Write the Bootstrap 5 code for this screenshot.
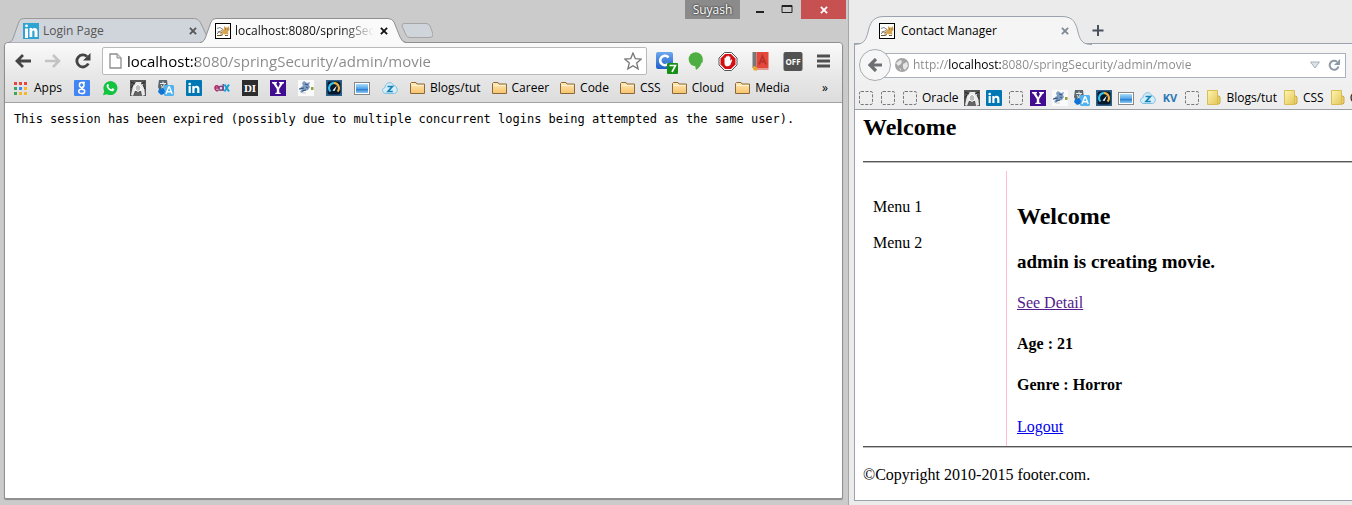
<!DOCTYPE html>
<html lang="en">
<head>
<meta charset="utf-8">
<meta name="viewport" content="width=device-width, initial-scale=1">
<title>Session test</title>
<link href="https://cdn.jsdelivr.net/npm/bootstrap@5.3.0/dist/css/bootstrap.min.css" rel="stylesheet">
<style>
body{background:#ebebeb;font:12px/16px "Open Sans","Noto Sans",sans-serif;color:#000;overflow:hidden}
.desk{display:grid;grid-template-columns:849fr 503fr;min-height:100vh}
button{font:inherit;color:inherit;background:none;border:0;padding:0}
button svg,a svg{display:block;flex:none}
.i16{width:16px;height:16px}
.bm{display:flex;align-items:center;gap:4px;color:#000;text-decoration:none;white-space:nowrap;flex:none}

/* Chrome window */
.chrome{background:#cbcbcb;border-right:1px solid #a6a6a6;padding:0 5px 6px 4px;min-width:0}
.caption-bar{height:18px}
.user{background:#8b8b8b;color:#fff;height:19px;width:55px;text-shadow:0 0 2px #333,0 0 2px #333;line-height:18px;margin-right:14px}
.cap{width:12px;height:19px;margin-right:15px}
.cap.big{margin-right:8px}
.close-x{background:#c75050;width:45px;height:19px;margin-right:-3px}
.ctabs{height:25px;padding-left:4px;margin-bottom:-1px;position:relative}
.ctab{position:relative;width:205px;height:25px;padding:0 16px 0 15px;color:#555}
.ctab.on{margin-left:-13px;width:206px;padding:0 18px 0 15px;color:#111}
.ctab > .shape{position:absolute;inset:0;width:100%;height:100%}
.ctab > button{position:relative}
.ctab .ttl{overflow:hidden;white-space:nowrap;text-align:left;gap:4px}
.ctab.on .ttl{margin-right:6px;-webkit-mask-image:linear-gradient(90deg,#000 80%,transparent);mask-image:linear-gradient(90deg,#000 80%,transparent)}
.newtab{margin-left:-5px}
.cframe{border:1px solid #8f8f8f;border-radius:4px 4px 2px 2px;box-shadow:0 1px 1px #8a8a8a;background:#fff}
.ctop{background:linear-gradient(#fafafa,#e8e8e8 55%,#dcdcdc);border-bottom:1px solid #a2a2a2;border-radius:4px 4px 0 0;height:60px}
.ctool{height:36px;padding:0 11px 0 10px}
.navs{gap:14px;margin-right:11px}
.exts{gap:10px;margin-left:9px}
.omni{height:28px;border:1px solid #b9b9b9;border-radius:2px;background:#fff;padding:0 4px 0 6px;min-width:0}
.url{border:0;outline:0;padding:0;min-width:0;color:#888;-webkit-text-fill-color:transparent}
.omni .url{font-size:15px;line-height:24px;background:linear-gradient(90deg,#000 69px,#888 0) text;-webkit-background-clip:text;margin-left:5px}
.cbook{gap:12px;height:18px;padding:0 14px 0 9px}
.cbook .apps{gap:7px}
.folders{gap:11px}
.session{font:12px/16px "DejaVu Sans Mono",monospace;padding:8px 9px}

/* Firefox window */
.fox{padding:16px 0 4px 5px;min-width:0;overflow:hidden}
.ftabs{height:28px;margin-bottom:-1px;position:relative}
.ftab{position:relative;width:238px;height:29px;padding:0 23px 0 25px}
.ftab .ttl{gap:6px}
.ftab .shut{color:#7d8893}
.ftab > .shape{position:absolute;inset:0;width:100%;height:100%}
.ftab > button{position:relative}
.fframe{border:1px solid #9aa3ad;border-right:0;background:#fff}
.ftop{background:linear-gradient(#f5f5f5,#ededed);border-bottom:1px solid #9c9fa3;height:66px}
.ftool{height:42px;padding:0 6px 0 4px}
.fback{width:32px;height:32px;border:1px solid #a9adb3;border-radius:50%;background:#f6f6f6;position:relative;flex:none}
.fbar{height:25px;border:1px solid #a9b1bd;background:#fff;margin-left:-8px;padding:0 5px 0 11px;min-width:0}
.fbar .url{font-size:12px;line-height:20px;background:linear-gradient(90deg,#888 36px,#000 36px 88px,#888 88px) text;-webkit-background-clip:text}
.fbook{gap:6px;height:23px;padding-left:3px;overflow:hidden}
.blank{width:16px;height:16px;display:block;flex:none;padding:1px}
.doc{font:16px/18px "Liberation Serif",serif;padding:3px 0 0 8px}
.doc h2{font:bold 24px/28px "Liberation Serif",serif;margin:0 0 20px}
.doc h3{font:bold 19px/22px "Liberation Serif",serif;margin:0 0 21px}
.doc p{margin:0 0 23px}
.rule{border:0;border-top:1px solid #555;border-bottom:1px solid #bbb;height:2px;margin:0;opacity:1}
.cols{margin-top:8px}
.menu{flex:0 0 144px;border-right:1px solid pink;padding:27px 10px 0}
.menu a{display:block;color:#000;text-decoration:none;margin-bottom:18px}
.main{padding:31px 10px 10px}
.main h2{margin-bottom:21px}
.main p:last-of-type{margin-bottom:24px}
.main a{color:#0000ee}.main a.seen{color:#551a8b}
.foot{margin-top:18px}
</style>
</head>
<body>
<svg width="0" height="0" class="position-absolute" aria-hidden="true">
<defs>
<linearGradient id="gf" x2="0" y2="1"><stop stop-color="#ffe9b8"/><stop offset="1" stop-color="#f7c36b"/></linearGradient>
<linearGradient id="gy" x2="1" y2="1"><stop stop-color="#fff6b0"/><stop offset="1" stop-color="#e3c65a"/></linearGradient>
<linearGradient id="gb" x2="0" y2="1"><stop stop-color="#6fa8ee"/><stop offset="1" stop-color="#1d5fc8"/></linearGradient>
<linearGradient id="gs" x2="0" y2="1"><stop stop-color="#a9dbfa"/><stop offset=".55" stop-color="#4aa0e6"/><stop offset=".6" stop-color="#2f7fcf"/><stop offset="1" stop-color="#8ccaf2"/></linearGradient>
</defs>
<symbol id="cat" viewBox="0 0 16 16"><rect x=".5" y=".5" width="15" height="15" fill="#fff" stroke="#000"/><path d="M5 11l2-3 2-2V3l2 1.500h1.500L14 3l.5 4-1.500 1.500.5 3.500-1.500-1-2 .5-2-1-2 1.500z" fill="#d8a450"/><path d="M2 5.500l3-1 3 2-2 1.500-3.500 1M2 11l2-2 3 .5" fill="none" stroke="#8a8580"/><path d="M2 12.500h4l2-1M10 12.500h3M10 6h1M12.500 6h1" fill="none" stroke="#6d5630"/></symbol>
<symbol id="in" viewBox="0 0 16 16"><rect width="16" height="16" rx="1" fill="#0077b5"/><circle cx="3.700" cy="4" r="1.300" fill="#fff"/><path d="M2.600 6h2.200v7H2.600zM6.300 6h2.100v1c1.200-1.900 5-1.700 5 1.700V13h-2.200V9.400c0-2.300-2.700-2-2.700 0V13H6.300z" fill="#fff"/></symbol>
<symbol id="lin" viewBox="0 0 16 16"><rect width="16" height="16" fill="#2fa3d1"/><circle cx="3.500" cy="2.800" r="1.400" fill="#fff"/><path d="M2 5.500h3V15H2zM6.500 5h2.700v1.300C11 4 14.500 5 14.500 8v6h-3V8.800c0-2-2.200-1.700-2.200 0V14H6.500z" fill="#fff"/></symbol>
<symbol id="goog" viewBox="0 0 16 16"><rect width="16" height="16" rx="1" fill="#4285f4"/><g fill="none" stroke="#fff" stroke-width="1.500"><ellipse cx="7.700" cy="5" rx="2.300" ry="2.400"/><ellipse cx="7.700" cy="11.400" rx="3" ry="2.100"/><path d="M8 2.600h3M9.500 7c-3 .8-1.500 1.500 0 2.800"/></g></symbol>
<symbol id="wa" viewBox="0 0 16 16"><path d="M1 15.300l1.200-4A7 7 0 1 1 5 14.200z" fill="#11c33f"/><path d="M5.200 4.300c.7-.6 1.200-.3 1.600.9.300.8-.6 1-.4 1.600.5 1.200 1.500 2 2.600 2.400.7.200 1-1.300 1.600-1 1.300.5 1.900.9 1.600 1.500-.8 2-2.900 1.800-4.700.6C5.600 9 3.600 6.300 5.200 4.300z" fill="#fff"/></symbol>
<symbol id="arch" viewBox="0 0 16 16"><rect width="16" height="16" fill="#555"/><path d="M1 15L3 6l3-4h5l3 4 1 9-3 1-1-5H5l-2 5z" fill="#e9e9e9"/><path d="M1 2l4 2M15 2l-4 2M1 8l2-3M15 9l-2-4" stroke="#222"/><path d="M5.500 10l-.5-3 3-3 3 3-.5 3-2.500 1.500z" fill="#bdbdbd" stroke="#fff"/><path d="M4 16l2-4h4l2 4z" fill="#666"/></symbol>
<symbol id="tr" viewBox="0 0 16 16"><path d="M1 0h8l1 8-3 3H2L0 7z" fill="#5a666d"/><path d="M2 3.500h6M5 1.500v2M3 8.500c2-1 3-3 3.500-5M3 5c1 2 2 3 4 3.500" stroke="#e9eef0" fill="none"/><path d="M7 5h8l1 1v9l-1 1H7L6 15V6z" fill="#4eb3ef"/><path d="M1 9l4-1 2 3-1 3-3 1-3-3z" fill="#1173d4"/><path d="M8 14l2.700-7h.8l2.700 7M9 11.700h4.300" stroke="#fff" stroke-width="1.400" fill="none"/></symbol>
<symbol id="yah" viewBox="0 0 16 16"><rect width="16" height="16" fill="#410c8f"/><path d="M2 2h5v1.300l-1 .3 2.200 3.900 2-3.900-1.200-.3V2h5v1.300l-1.300.4L9.200 9v3.500l1.500.4V14H5.300v-1.100l1.500-.4V9L3.300 3.700 2 3.300z" fill="#fff"/></symbol>
<symbol id="mouse" viewBox="0 0 16 16"><rect width="16" height="16" fill="#fafafa"/><path d="M4 3l2-2 3 2 3-1-1 3 1 2-2 3-4 1-2 2-2-1 2-3-3 1 2-3 2-1z" fill="#7d9cc0"/><path d="M7 4l3 1M1 9l5-1M4 11l4-1M8 7l2 1" stroke="#33507a" fill="none"/><path d="M4 13h4" stroke="#ccc"/><path d="M13 7h2.500v3H13z" fill="#93a03c"/></symbol>
<symbol id="gauge" viewBox="0 0 16 16"><rect width="16" height="16" fill="#2d5f8a"/><rect x="1.500" y="1.500" width="13" height="13" rx="2" fill="#06182b"/><path d="M4.500 11.500A5 5 0 0 1 8 3" fill="none" stroke="#36c1ee" stroke-width="2"/><path d="M8 3a5 5 0 0 1 3.500 8.500" fill="none" stroke="#f0b53c" stroke-width="2"/><path d="M6.500 10.500L11 5.500 8.500 11z" fill="#fff"/></symbol>
<symbol id="pic" viewBox="0 0 16 16"><rect x=".5" y="2.500" width="15" height="12" fill="#fff" stroke="#888"/><rect x="2" y="4" width="12" height="9" fill="url(#gs)"/></symbol>
<symbol id="cloud" viewBox="0 0 16 16"><path d="M4 13.500C-.5 13.500-.3 8 3 7.500 3.500 2 10 1 11.500 5.500c4 .2 5.500 7 1 8z" fill="#d3eefa" stroke="#7fbfdd"/><path d="M5.500 6.500h4.800l-4.300 5h4.800" fill="none" stroke="#1683b8" stroke-width="1.700"/></symbol>
<symbol id="fold" viewBox="0 0 16 16"><path d="M.5 13.500v-10l1-1H6l1 1.500h7.500v9.500z" fill="url(#gf)" stroke="#8a6a3c"/><path d="M1.500 5.500h12" stroke="#fff3d4"/></symbol>
<symbol id="ffold" viewBox="0 0 16 16"><path d="M10 6h3l1 1v6l-1 1h-3z" fill="#e8d06a" stroke="#c9a93f"/><path d="M1.500.5h10v14h-10z" fill="url(#gy)" stroke="#d9bd55"/></symbol>
<symbol id="dash" viewBox="0 0 14 14"><rect x=".5" y=".5" width="13" height="13" rx="1.500" fill="none" stroke="#777" stroke-dasharray="3 1.500"/></symbol>
<symbol id="x" viewBox="0 0 9 9"><path d="M1 1l7 7M8 1L1 8" stroke="currentColor" stroke-width="2"/></symbol>
</svg>

<div class="desk">
<section class="chrome d-flex flex-column" aria-label="Chrome window">
  <div class="caption-bar d-flex justify-content-end">
    <button class="user">Suyash</button>
    <button class="cap" aria-label="Minimize"><svg width="12" height="19"><path d="M2 12h8" stroke="#222" stroke-width="2"/></svg></button>
    <button class="cap big" aria-label="Maximize"><svg width="12" height="19"><path d="M1 5.500h10v7H1z" fill="none" stroke="#222"/><path d="M1 6h10" stroke="#222" stroke-width="2"/></svg></button>
    <button class="close-x d-flex align-items-center justify-content-center text-white" aria-label="Close"><svg width="8" height="8"><use href="#x"/></svg></button>
  </div>
  <div class="ctabs d-flex">
    <div class="ctab d-flex align-items-center">
      <svg class="shape" viewBox="0 0 208 25" preserveAspectRatio="none"><path d="M1 24.500C4 24 5 21 6 18L11 4Q12 .5 16 .5H189Q193 .5 195 4L205 24.500" fill="#d0d4db" stroke="#999"/></svg>
      <button class="ttl d-flex align-items-center flex-grow-1"><svg class="i16"><use href="#lin"/></svg><span>Login Page</span></button>
      <button aria-label="Close tab"><svg width="8" height="8"><use href="#x"/></svg></button>
    </div>
    <div class="ctab on d-flex align-items-center">
      <svg class="shape" viewBox="0 0 206 25" preserveAspectRatio="none"><path d="M0 25C4 24.500 5 21 6 18L11 4Q12 .5 16 .5H188Q192 .5 194 4L200 19Q202 24.500 206 25z" fill="#fafafa"/><path d="M0 24.500C4 24 5 21 6 18L11 4Q12 .5 16 .5H188Q192 .5 194 4L200 19Q202 24 206 24.500" fill="none" stroke="#8f8f8f"/></svg>
      <button class="ttl d-flex align-items-center"><svg class="i16"><use href="#cat"/></svg><span>localhost:8080/springSecu</span></button>
      <button class="ms-auto" aria-label="Close tab"><svg width="8" height="8"><use href="#x"/></svg></button>
    </div>
    <button aria-label="New tab" class="newtab align-self-start"><svg width="32" height="24"><path d="M3 5.500h22q3 0 4 2.500l3 8q0 3.500-3 3.500H9q-3 0-4-2.500L1 8q0-2.500 2-2.500z" fill="#d0d4db" stroke="#a5a5a5"/></svg></button>
  </div>
  <div class="cframe flex-grow-1">
    <div class="ctop">
      <div class="ctool d-flex align-items-center">
        <div class="navs d-flex">
          <button aria-label="Back"><svg width="16" height="16" viewBox="0 0 16 16"><path d="M16 8H2M8 2L2 8l6 6" fill="none" stroke="#444" stroke-width="2.800"/></svg></button>
          <button aria-label="Forward"><svg width="16" height="16" viewBox="0 0 16 16"><path d="M0 8h13M8 2l6 6-6 6" fill="none" stroke="#c3c3c3" stroke-width="2.500"/></svg></button>
          <button aria-label="Reload"><svg width="16" height="16" viewBox="0 0 16 16"><path d="M13.300 10.500A6 6 0 1 1 12 3.600" fill="none" stroke="#444" stroke-width="2.800"/><path d="M15.500 0v7.500H8z" fill="#444"/></svg></button>
        </div>
        <div class="omni d-flex align-items-center flex-grow-1">
          <svg width="13" height="16" viewBox="0 0 13 16" class="flex-shrink-0"><path d="M1 1h7l4 4v10H1z" fill="#fff" stroke="#8d8d8d" stroke-width="1.300"/><path d="M8 1v4h4" fill="#ddd" stroke="#8d8d8d"/></svg>
          <input class="url flex-grow-1" aria-label="Address" value="localhost:8080/springSecurity/admin/movie">
          <button aria-label="Bookmark this page"><svg width="18" height="18" viewBox="0 0 18 18"><path d="M9 1l2.300 5.600 6 .5-4.600 3.900 1.400 5.900L9 13.700l-5.100 3.200L5.300 11 .7 7.100l6-.5z" fill="#fff" stroke="#777" stroke-width="1.300"/></svg></button>
        </div>
        <div class="exts d-flex align-items-center">
          <button class="pt-1" aria-label="Extension C, 7 items"><svg width="22" height="22" viewBox="0 0 22 22"><rect width="17" height="17" rx="2" fill="url(#gb)"/><path d="M12.500 5.500A4.700 4.700 0 1 0 12.500 11.500" fill="none" stroke="#fff" stroke-width="2.600"/><rect x="11" y="11" width="11" height="11" rx="1" fill="#159015"/><path d="M13.500 13.500h6L16 20" fill="none" stroke="#fff" stroke-width="1.600"/></svg></button>
          <button class="me-1" aria-label="Green extension"><svg width="16" height="18" viewBox="0 0 16 18"><path d="M7 13h5q4-3 3-6-1 7-7 11z" fill="#4fae41"/><circle cx="7.700" cy="7.200" r="7" fill="#4fae41"/></svg></button>
          <button class="me-1" aria-label="Ad blocker"><svg width="20" height="19" viewBox="0 0 19 19"><path d="M6 .5h7L18.500 6v7L13 18.500H6L.5 13V6z" fill="#fff" stroke="#555"/><path d="M6.500 2h6L17 6.500v6L12.500 17h-6L2 12.500v-6z" fill="#d40f14"/><path d="M6 11V6q.7-.8 1.400 0V4.700q.7-.8 1.500 0V4q.7-.8 1.400 0v.8q.8-.8 1.500 0V9l1-1.500q1-.3 1 .5l-2 5q-2 2-4.500 1-1.500-1-1.300-3z" fill="#fff"/></svg></button>
          <button class="me-1" aria-label="Dictionary"><svg width="17" height="19" viewBox="0 0 16 19"><path d="M0 0h4v16H0z" fill="#777"/><path d="M4 0h12v16H4z" fill="#e4483c"/><path d="M6.500 12.500L10 4l3.500 8.500M7.500 9.500h5" fill="none" stroke="#b73229" stroke-width="1.800"/><path d="M4 16.500h12v1H4z" fill="#d43"/><path d="M0 15l2-1 3 2-1 3-3-1z" fill="#e8a62c"/></svg></button>
          <button class="me-1" aria-label="Extension off"><svg width="20" height="19" viewBox="0 0 19 19"><rect width="19" height="19" rx="2" fill="#525252"/><text x="9.500" y="13" font-size="8" font-weight="700" font-family="Open Sans, sans-serif" fill="#fff" text-anchor="middle">OFF</text></svg></button>
          <button aria-label="Menu"><svg width="14" height="14" viewBox="0 0 14 14"><path d="M0 2h13M0 7h13M0 12h13" stroke="#505050" stroke-width="3"/></svg></button>
        </div>
      </div>
      <nav class="cbook d-flex align-items-center" aria-label="Bookmarks">
        <a class="bm apps" href="#"><svg width="13" height="13" viewBox="0 0 13 13"><path d="M0 0h3v3H0zM5 0h3v3H5zM10 0h3v3h-3z" fill="#e8453c"/><path d="M0 5h3v3H0zM0 10h3v3H0z" fill="#3aa757"/><path d="M5 5h3v3H5z" fill="#4285f4"/><path d="M10 5h3v3h-3zM5 10h3v3H5zM10 10h3v3h-3z" fill="#f9b52c"/></svg>Apps</a>
        <a class="bm" href="#" aria-label="Google"><svg class="i16"><use href="#goog"/></svg></a>
        <a class="bm" href="#" aria-label="WhatsApp"><svg class="i16"><use href="#wa"/></svg></a>
        <a class="bm" href="#" aria-label="Archive"><svg class="i16"><use href="#arch"/></svg></a>
        <a class="bm" href="#" aria-label="Translate"><svg class="i16"><use href="#tr"/></svg></a>
        <a class="bm" href="#" aria-label="LinkedIn"><svg class="i16"><use href="#in"/></svg></a>
        <a class="bm" href="#" aria-label="Courses"><svg class="i16" viewBox="0 0 16 16"><g fill="none" stroke-width="1.500"><path d="M1 8h3.500C4.500 5 1 5 1 8s2.500 3 3.500 2" stroke="#b72667"/><circle cx="7" cy="8.300" r="2" stroke="#7d4a86"/><path d="M9.200 4v7" stroke="#7d4a86"/><path d="M10.500 4.500l4.500 7M15 4.500l-4.500 7" stroke="#1d9dd9" stroke-width="2"/></g></svg></a>
        <a class="bm" href="#" aria-label="DI"><svg class="i16" viewBox="0 0 16 16"><rect width="16" height="16" fill="#2d2d2d"/><text x="8" y="12" font-size="11" font-weight="700" font-family="Liberation Serif, serif" fill="#fff" text-anchor="middle">DI</text></svg></a>
        <a class="bm" href="#" aria-label="Yahoo"><svg class="i16"><use href="#yah"/></svg></a>
        <a class="bm" href="#" aria-label="Mouse"><svg class="i16"><use href="#mouse"/></svg></a>
        <a class="bm" href="#" aria-label="Speed test"><svg class="i16"><use href="#gauge"/></svg></a>
        <a class="bm" href="#" aria-label="Screen"><svg class="i16"><use href="#pic"/></svg></a>
        <a class="bm" href="#" aria-label="Cloud files"><svg class="i16"><use href="#cloud"/></svg></a>
        <div class="folders d-flex">
          <a class="bm" href="#"><svg class="i16"><use href="#fold"/></svg>Blogs/tut</a>
          <a class="bm" href="#"><svg class="i16"><use href="#fold"/></svg>Career</a>
          <a class="bm" href="#"><svg class="i16"><use href="#fold"/></svg>Code</a>
          <a class="bm" href="#"><svg class="i16"><use href="#fold"/></svg>CSS</a>
          <a class="bm" href="#"><svg class="i16"><use href="#fold"/></svg>Cloud</a>
          <a class="bm" href="#"><svg class="i16"><use href="#fold"/></svg>Media</a>
        </div>
        <button class="ms-auto" aria-label="More bookmarks">»</button>
      </nav>
    </div>
    <div class="session">This session has been expired (possibly due to multiple concurrent logins being attempted as the same user).</div>
  </div>
</section>

<section class="fox d-flex flex-column" aria-label="Firefox window">
  <div class="ftabs d-flex align-items-start">
    <div class="ftab d-flex align-items-center">
      <svg class="shape" viewBox="0 0 238 29" preserveAspectRatio="none"><path d="M0 29V28.500C10 28.500 12 24 14 16S18 .5 30 .5H208C220 .5 222 8 224 16s4 12.500 14 12.500V29z" fill="#f5f5f5"/><path d="M0 28.500C10 28.500 12 24 14 16S18 .5 30 .5H208C220 .5 222 8 224 16s4 12.500 14 12.500" fill="none" stroke="#9aa3ad"/></svg>
      <button class="ttl d-flex align-items-center flex-grow-1"><svg class="i16"><use href="#cat"/></svg><span>Contact Manager</span></button>
      <button class="shut" aria-label="Close tab"><svg width="8" height="8"><use href="#x"/></svg></button>
    </div>
    <button aria-label="New tab" class="mt-2"><svg width="12" height="14"><path d="M6 1v11M.5 6.500h11" stroke="#49525c" stroke-width="2"/></svg></button>
  </div>
  <div class="fframe flex-grow-1">
    <div class="ftop">
      <div class="ftool d-flex align-items-center">
        <button class="fback d-flex align-items-center justify-content-center" aria-label="Back"><svg width="14" height="14" viewBox="0 0 14 14"><path d="M14 7H3M8 1L2 7l6 6" fill="none" stroke="#6d6f73" stroke-width="3.200"/></svg></button>
        <div class="fbar d-flex align-items-center flex-grow-1">
          <svg width="14" height="14" viewBox="0 0 14 14" class="flex-shrink-0 me-1"><circle cx="7" cy="7" r="7" fill="#a3a3a3"/><path d="M1 5l4-3 2 1-1 3-3 2zM8 6l4-2 1 4-3 4-2-2zM4 10l2 1v2z" fill="#e6e6e6"/></svg>
          <input class="url flex-grow-1" aria-label="Address" value="http://localhost:8080/springSecurity/admin/movie">
          <button aria-label="History" class="me-2"><svg width="10" height="8"><path d="M.5 1h9L5 7z" fill="#dfe3e8" stroke="#a7b0ba"/></svg></button>
          <button aria-label="Reload"><svg width="12" height="12" viewBox="0 0 12 12"><path d="M10.500 7.500A4.500 4.500 0 1 1 9 2.700" fill="none" stroke="#8d99a6" stroke-width="2"/><path d="M12 0v6H6z" fill="#8d99a6"/></svg></button>
        </div>
      </div>
      <nav class="fbook d-flex align-items-center" aria-label="Bookmarks">
        <a class="blank" href="#" aria-label="Bookmark"><svg width="14" height="14"><use href="#dash"/></svg></a>
        <a class="blank" href="#" aria-label="Bookmark"><svg width="14" height="14"><use href="#dash"/></svg></a>
        <a class="bm" href="#"><span class="blank"><svg width="14" height="14"><use href="#dash"/></svg></span>Oracle</a>
        <a class="bm" href="#" aria-label="Archive"><svg class="i16"><use href="#arch"/></svg></a>
        <a class="bm" href="#" aria-label="LinkedIn"><svg class="i16"><use href="#in"/></svg></a>
        <a class="blank" href="#" aria-label="Bookmark"><svg width="14" height="14"><use href="#dash"/></svg></a>
        <a class="bm" href="#" aria-label="Yahoo"><svg class="i16"><use href="#yah"/></svg></a>
        <a class="bm" href="#" aria-label="Mouse"><svg class="i16"><use href="#mouse"/></svg></a>
        <a class="bm" href="#" aria-label="Translate"><svg class="i16"><use href="#tr"/></svg></a>
        <a class="bm" href="#" aria-label="Speed test"><svg class="i16"><use href="#gauge"/></svg></a>
        <a class="bm" href="#" aria-label="Screen"><svg class="i16"><use href="#pic"/></svg></a>
        <a class="bm" href="#" aria-label="Cloud files"><svg class="i16"><use href="#cloud"/></svg></a>
        <a class="bm" href="#" aria-label="KV"><svg class="i16" viewBox="0 0 16 16"><text x="8" y="12" font-size="11" font-weight="700" font-family="Open Sans, sans-serif" fill="#2a78b8" text-anchor="middle">KV</text></svg></a>
        <a class="blank" href="#" aria-label="Bookmark"><svg width="14" height="14"><use href="#dash"/></svg></a>
        <a class="bm" href="#"><svg class="i16"><use href="#ffold"/></svg>Blogs/tut</a>
        <a class="bm" href="#"><svg class="i16"><use href="#ffold"/></svg>CSS</a>
        <a class="bm" href="#"><svg class="i16"><use href="#ffold"/></svg>C</a>
      </nav>
    </div>
    <div class="doc">
      <h2>Welcome</h2>
      <hr class="rule">
      <div class="cols d-flex">
        <nav class="menu"><a href="#">Menu 1</a><a href="#">Menu 2</a></nav>
        <main class="main">
          <h2>Welcome</h2>
          <h3>admin is creating movie.</h3>
          <p><a class="seen" href="#">See Detail</a></p>
          <p><b>Age : 21</b></p>
          <p><b>Genre : Horror</b></p>
          <a href="#">Logout</a>
        </main>
      </div>
      <hr class="rule">
      <div class="foot">©Copyright 2010-2015 footer.com.</div>
    </div>
  </div>
</section>
</div>
<script src="https://cdn.jsdelivr.net/npm/bootstrap@5.3.0/dist/js/bootstrap.bundle.min.js"></script>
</body>
</html>
